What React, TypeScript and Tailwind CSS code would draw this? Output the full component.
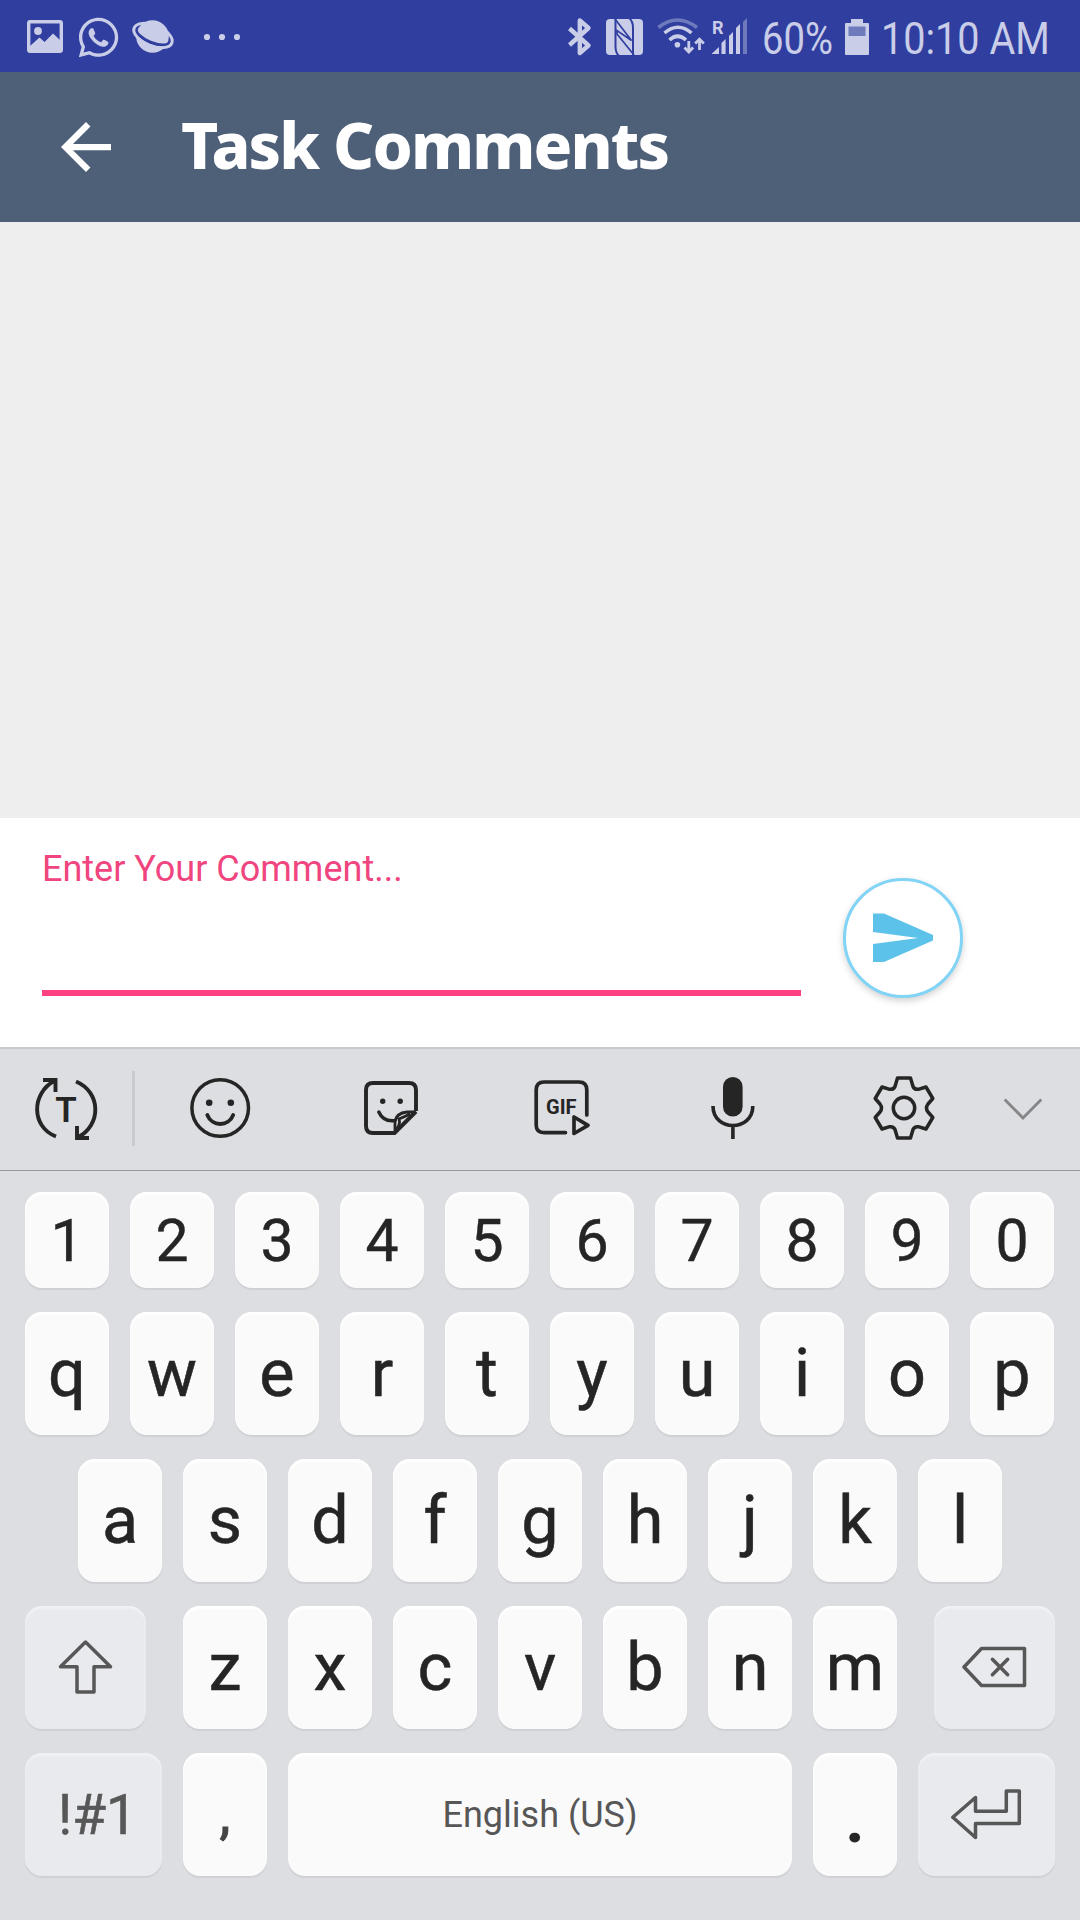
import React from "react";
import { FaWhatsapp } from "react-icons/fa";

const INK = "#252525";
const GREY = "#575757";
const PALE = "#c9cde8";
const BAR = "#303f9f";

function Icon({ box, className = "", children }: { box: string; className?: string; children: React.ReactNode }) {
  const [, , w, h] = box.split(" ");
  return (
    <svg viewBox={box} width={w} height={h} className={`block shrink-0 overflow-visible ${className}`} fill="none">
      {children}
    </svg>
  );
}

function StatusBar() {
  return (
    <div className="flex h-[72px] items-start bg-[#303f9f] pl-[27px] text-[#c9cde8]">
      <Icon box="27 0 36 72">
        <rect x="28.7" y="21.7" width="32.6" height="29.6" rx="1.5" stroke={PALE} strokeWidth="3.4" />
        <circle cx="38" cy="31" r="3.9" fill={PALE} />
        <path d="M30 46L39.5 37.5L44.5 42L53 33.5L60 40V52H30Z" fill={PALE} />
      </Icon>
      <div className="ml-[15px] flex h-[74px] w-[40px] items-center justify-center">
        <FaWhatsapp size={45} className="shrink-0" />
      </div>
      <Icon box="131 0 44 72" className="ml-[13px]">
        <circle cx="152.5" cy="36.5" r="16.3" fill={PALE} />
        <g transform="translate(153 35.5) rotate(22)">
          <path d="M-18 0A18 7.2 0 0 0 18 0" stroke={BAR} strokeWidth="3.2" />
          <ellipse rx="20.3" ry="10.3" stroke={PALE} strokeWidth="3" />
        </g>
      </Icon>
      <Icon box="203 0 38 72" className="ml-[28px]">
        <circle cx="207" cy="37" r="3.1" fill={PALE} />
        <circle cx="222" cy="37" r="3.1" fill={PALE} />
        <circle cx="237" cy="37" r="3.1" fill={PALE} />
      </Icon>
      <Icon box="568 0 24 72" className="ml-[327px]">
        <path d="M569.5 28.5L588.5 45.5L579.8 53V20.5L588.5 28L569.5 45" stroke={PALE} strokeWidth="4.4" strokeLinejoin="round" />
      </Icon>
      <Icon box="606 0 37 72" className="ml-[14px]">
        <rect x="606" y="19" width="37" height="36" rx="4" fill={PALE} />
        <path d="M615.5 19V47Q615.700 53 619 56M629 18Q633 21 633 28V55" stroke={BAR} strokeWidth="2" />
        <path d="M615 19L631.500 40.500L617 30.500V34L634 55" stroke={BAR} strokeWidth="1.700" />
      </Icon>
      <Icon box="657 0 50 72" className="ml-[14px]">
        <path d="M658.500 27.500Q677 12.500 697 27.500" stroke="#6f7abd" strokeWidth="3.600" />
        <path d="M664.500 33Q678 21.500 691.500 33" stroke={PALE} strokeWidth="3.600" />
        <path d="M669.500 40Q677.500 32.500 686 40" stroke={PALE} strokeWidth="3.600" />
        <circle cx="677.400" cy="44.700" r="2.800" fill={PALE} />
        <path d="M688.800 41V52M684.500 47.500L688.800 52L693.100 47.500M699.500 50V39M695.200 43.500L699.500 39.200L703.800 43.500" stroke={PALE} strokeWidth="2.800" />
      </Icon>
      <Icon box="711 0 37 72" className="ml-[4px]">
        <text x="712" y="33.700" fontFamily="Roboto, sans-serif" fontSize="18" fontWeight="700" fill={PALE}>R</text>
        <path d="M711.500 54L719 47V54ZM721.500 43L725.600 39V54H721.500ZM729 36L733 32V54H729ZM736 28L740 24V54H736Z" fill={PALE} />
        <path d="M743 22L747 18V54H743Z" fill="#6f7abd" />
      </Icon>
      <div className="ml-[14px] flex h-[77px] w-[70px] items-center">
        <span className="origin-left scale-x-[0.85] font-[Roboto,sans-serif] text-[45px] leading-none whitespace-nowrap">60%</span>
      </div>
      <Icon box="845 0 24 72" className="ml-[13px]">
        <path d="M846 23H851V19H863V23H868Q869 23 869 24V54Q869 55 868 55H846Q845 55 845 54V24Q845 23 846 23Z" fill={PALE} />
        <rect x="848.500" y="26.500" width="17" height="9.500" fill="#6f7abd" />
      </Icon>
      <div className="ml-[12px] flex h-[77px] w-[170px] items-center">
        <span className="origin-left scale-x-[0.88] font-[Roboto,sans-serif] text-[45px] leading-none whitespace-nowrap">10:10 AM</span>
      </div>
    </div>
  );
}

function Header() {
  return (
    <header className="flex h-[150px] items-center bg-[#4e5f78] pl-[61px]">
      <svg viewBox="4 4 16 16" className="block size-[50px]" fill="white">
        <path d="M20 11H7.83l5.590-5.590L12 4l-8 8 8 8 1.410-1.410L7.830 13H20v-2z" />
      </svg>
      <h1 className="mb-[4px] ml-[70px] font-['Noto_Sans',sans-serif] text-[64px] leading-none font-extrabold tracking-[-1.85px] whitespace-nowrap text-white">
        Task Comments
      </h1>
    </header>
  );
}

function CommentBox() {
  return (
    <div className="flex h-[229px] bg-white pl-[42px]">
      <div className="flex h-[178px] w-[759px] flex-col justify-between border-b-[6px] border-[#ff4081] pt-[32px]">
        <label className="font-[Roboto,sans-serif] text-[36px] leading-[38px] whitespace-nowrap text-[#f0457f]">
          Enter Your Comment...
        </label>
      </div>
      <button className="mt-[60px] ml-[42px] flex size-[120px] items-center justify-center rounded-full border-[3px] border-[#81d4f5] bg-white pb-[1px] shadow-[0_3px_7px_rgba(0,0,0,0.18)]">
        <Icon box="873 913 60 49">
          <path d="M873 913.500H884L933 935V940.500L884 962H873V944L918 938L873 932Z" fill="#5cc2ea" />
        </Icon>
      </button>
    </div>
  );
}

function Toolbar() {
  return (
    <div className="flex h-[124px] items-start border-t-2 border-b border-t-[#c8c9cc] border-b-[#98999b] pt-[22px] pl-[35px]">
      <Icon box="35 1071 62 75">
        <path d="M43 1080H55.500V1092M55 1080.500C31 1093 31 1127 56 1136.500M76 1081.500C101 1092 102 1125 77.500 1137.500M77 1126V1138H89" stroke={INK} strokeWidth="3.900" />
        <text x="66" y="1122" textAnchor="middle" fontFamily="Roboto, sans-serif" fontSize="35" fontWeight="600" fill={INK}>T</text>
      </Icon>
      <div className="ml-[35px] h-[75px] w-[3px] bg-[#c9cacd]" />
      <Icon box="190 1071 60 75" className="ml-[55px]">
        <circle cx="220.200" cy="1108" r="28.300" stroke={INK} strokeWidth="3.500" />
        <circle cx="209.200" cy="1102.700" r="3.300" fill={INK} />
        <circle cx="230.800" cy="1102.700" r="3.300" fill={INK} />
        <path d="M207.300 1115C212 1127 228.500 1127 233.200 1115" stroke={INK} strokeWidth="3.800" strokeLinecap="round" />
      </Icon>
      <Icon box="364 1071 54 75" className="ml-[114px]">
        <path d="M416 1111V1090Q416 1083 409 1083H373Q366 1083 366 1090V1126Q366 1133 373 1133H394.500L416 1111.500" stroke={INK} strokeWidth="3.900" strokeLinejoin="round" />
        <path d="M395 1132V1122Q396 1113 407 1112H415M395 1132Q401 1124 399 1119Q404 1117 410 1114" stroke={INK} strokeWidth="2.800" />
        <circle cx="382.700" cy="1101.300" r="2.700" fill={INK} />
        <circle cx="400.200" cy="1101.300" r="2.700" fill={INK} />
        <path d="M378.800 1112C382 1119 388 1121.500 395 1120.500" stroke={INK} strokeWidth="3.500" strokeLinecap="round" />
      </Icon>
      <Icon box="534 1071 56 75" className="ml-[116px]">
        <path d="M586.800 1115V1090Q586.800 1082 579 1082H544Q536.200 1082 536.200 1090V1125Q536.200 1132.600 544 1132.600H565.500" stroke={INK} strokeWidth="3.700" strokeLinecap="round" />
        <path d="M574 1117V1133.500L588 1125.300Z" stroke={INK} strokeWidth="3.700" strokeLinejoin="round" />
        <text x="561.300" y="1114" textAnchor="middle" fontFamily="Roboto, sans-serif" fontSize="20" fontWeight="700" fill={INK}>GIF</text>
      </Icon>
      <Icon box="711 1071 44 75" className="ml-[121px]">
        <rect x="723" y="1077" width="19.600" height="39.500" rx="9.800" fill={INK} />
        <path d="M713 1106C713 1132 752.800 1132 752.800 1106M732.900 1126V1139" stroke={INK} strokeWidth="3.600" />
      </Icon>
      <Icon box="874 1071 61 75" className="ml-[119px]">
        <g transform="translate(904 1108)" stroke={INK} strokeWidth="3.500" strokeLinejoin="round">
          <path d="M-6.500-30H6.500L9-21.500Q10.500-18 15-18.800L22-21L28.800-9.500L24-4Q21 0 24 4L28.800 9.500L22 21L15 18.800Q10.500 18 9 21.500L6.500 30H-6.500L-9 21.500Q-10.500 18-15 18.800L-22 21L-28.800 9.500L-24 4Q-21 0-24-4L-28.800-9.500L-22-21L-15-18.800Q-10.500-18-9-21.500Z" />
          <circle r="10.700" />
        </g>
      </Icon>
      <Icon box="1003 1071 40 75" className="ml-[68px]">
        <path d="M1004.700 1099.500L1023 1118L1041.300 1099.500" stroke="#868689" strokeWidth="2.900" />
      </Icon>
    </div>
  );
}

const KEY =
  "flex shrink-0 items-center justify-center rounded-[17px] font-[Roboto,sans-serif] leading-none bg-[#fafafa] shadow-[inset_0_3px_2px_#fff,0_2px_1px_#cfd0d4]";
const MOD =
  "flex shrink-0 items-center justify-center rounded-[17px] font-[Roboto,sans-serif] leading-none bg-[#e9eaee] text-[#575757] shadow-[inset_0_3px_2px_#f0f1f4,0_2px_1px_#cfd0d4]";

function Letters({ keys }: { keys: string }) {
  return (
    <>
      {keys.split("").map((k) => (
        <button key={k} className={`${KEY} h-[123px] w-[84px] text-[66.5px] text-[#252525] [-webkit-text-stroke:0.5px_#252525]`}>
          {k}
        </button>
      ))}
    </>
  );
}

function Keyboard() {
  return (
    <div className="flex h-[749px] flex-col gap-[24px] px-[25px] pt-[21px]">
      <div className="flex gap-[21px]">
        {"1234567890".split("").map((k) => (
          <button key={k} className={`${KEY} h-[96px] w-[84px] text-[59px] text-[#252525] [-webkit-text-stroke:0.4px_#252525]`}>
            {k}
          </button>
        ))}
      </div>
      <div className="flex gap-[21px]">
        <Letters keys="qwertyuiop" />
      </div>
      <div className="flex gap-[21px] pl-[53px]">
        <Letters keys="asdfghjkl" />
      </div>
      <div className="flex w-[1030px] justify-between">
        <button className={`${MOD} h-[123px] w-[121px] pb-[2px]`}>
          <Icon box="59 1640 53 54">
            <path d="M85.500 1642L110.500 1666.800H94V1692H77V1666.800H60.500Z" stroke={GREY} strokeWidth="3.500" strokeLinejoin="round" />
          </Icon>
        </button>
        <div className="flex gap-[21px]">
          <Letters keys="zxcvbnm" />
        </div>
        <button className={`${MOD} h-[123px] w-[121px] pb-[2px]`}>
          <Icon box="962 1648 65 40">
            <path d="M981.500 1649.500H1024.500V1686.500H981.500L964 1668Z" stroke={GREY} strokeWidth="3.500" strokeLinejoin="round" />
            <path d="M992.400 1660.300L1007.700 1675.700M1007.700 1660.300L992.400 1675.700" stroke={GREY} strokeWidth="3.500" strokeLinecap="round" />
          </Icon>
        </button>
      </div>
      <div className="flex gap-[21px]">
        <button className={`${MOD} h-[123px] w-[137px] pt-[1px] pl-[8px] text-[55px] [-webkit-text-stroke:0.6px_#575757]`}>!#1</button>
        <button className={`${KEY} h-[123px] w-[84px] text-[55px] text-[#444444] [-webkit-text-stroke:1px_#444444]`}>,</button>
        <button className={`${KEY} h-[123px] w-[504px] pt-[1px] text-[36px] text-[#575757]`}>English (US)</button>
        <button className={`${KEY} h-[123px] w-[84px] pt-[10px] text-[67px] font-bold text-[#252525]`}>.</button>
        <button className={`${MOD} h-[123px] w-[137px] pr-[1px]`}>
          <Icon box="952 1789 70 51">
            <path d="M953.800 1817.300L976.500 1797.500V1811.300H1007.300V1791H1020.300V1823.500H976.500V1837.500Z" stroke={GREY} strokeWidth="3.500" strokeLinejoin="round" />
          </Icon>
        </button>
      </div>
    </div>
  );
}

export default function App() {
  return (
    <div className="flex h-[1920px] w-[1080px] flex-col overflow-hidden bg-[#eeeeee]">
      <StatusBar />
      <Header />
      <main className="flex-1" />
      <CommentBox />
      <section className="bg-[#dddee2]">
        <Toolbar />
        <Keyboard />
      </section>
    </div>
  );
}
